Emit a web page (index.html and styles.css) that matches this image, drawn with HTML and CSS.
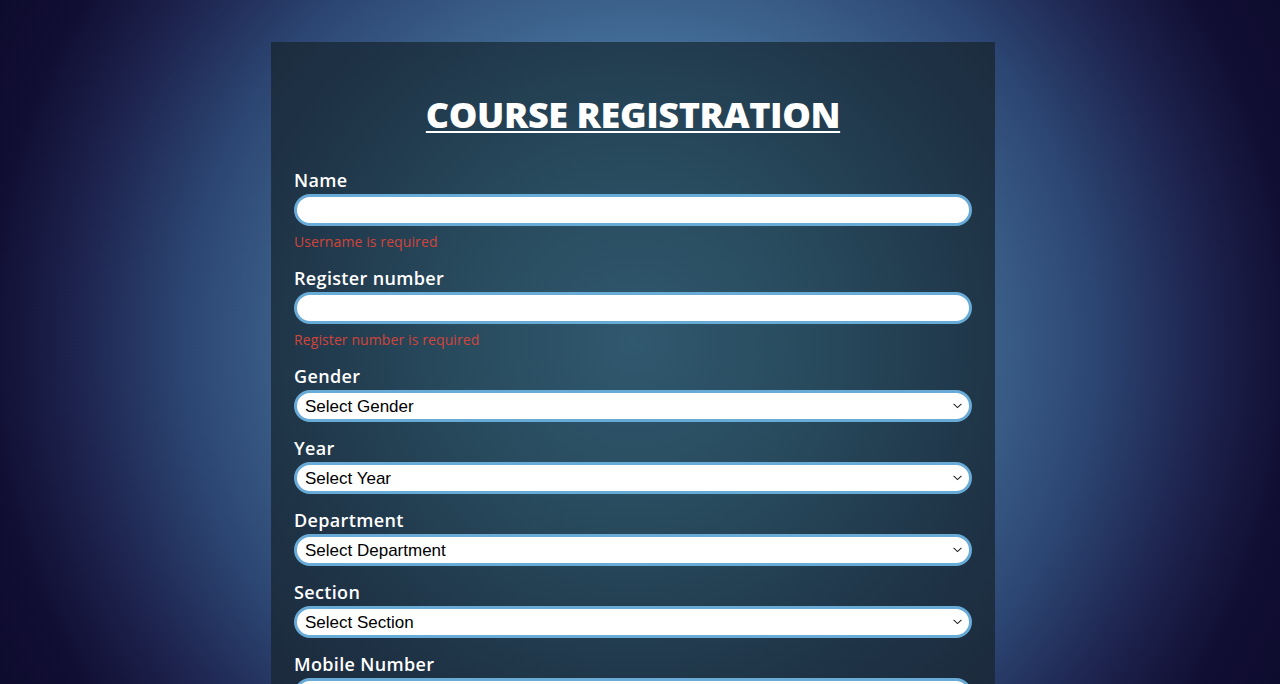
FILE: index.html
```html
<!DOCTYPE html>
<html lang="en">
<head>
<meta charset="utf-8">
<title>Course Registration</title>
<link rel="stylesheet" href="styles.css">
</head>
<body>
<main class="card">
  <h1 class="title">COURSE REGISTRATION</h1>
  <form class="form">
    <div class="field">
      <label class="label" for="name">Name</label>
      <input class="control" id="name" type="text">
      <div class="error">Username is required</div>
    </div>
    <div class="field">
      <label class="label" for="reg">Register number</label>
      <input class="control" id="reg" type="text">
      <div class="error">Register number is required</div>
    </div>
    <div class="field">
      <label class="label" for="gender">Gender</label>
      <select class="control select" id="gender"><option>Select Gender</option><option>Male</option><option>Female</option></select>
    </div>
    <div class="field">
      <label class="label" for="year">Year</label>
      <select class="control select" id="year"><option>Select Year</option><option>I</option><option>II</option><option>III</option><option>IV</option></select>
    </div>
    <div class="field">
      <label class="label" for="dept">Department</label>
      <select class="control select" id="dept"><option>Select Department</option></select>
    </div>
    <div class="field">
      <label class="label" for="section">Section</label>
      <select class="control select" id="section"><option>Select Section</option></select>
    </div>
    <div class="field">
      <label class="label" for="mobile">Mobile Number</label>
      <input class="control" id="mobile" type="text">
    </div>
    <div class="field">
      <label class="label" for="email">Email</label>
      <input class="control" id="email" type="text">
    </div>
  </form>
</main>
</body>
</html>
```
FILE: styles.css
```css
html {
  min-height: 100%;
  background: #0d0b2e radial-gradient(circle at 50% 50%, #5283ad 0%, #44709a 38%, #3a5e88 49%, #2c4572 63%, #1e2550 77%, #110e33 90%, #0d0b2e 100%) fixed;
}
body {
  margin: 0;
  padding: 42px 0 40px;
  font-family: "Open Sans", "Noto Sans", sans-serif;
  color: #ffffff;
}
.card {
  width: 724px;
  margin: 0 0 0 calc(50% - 369px);
  box-sizing: border-box;
  padding: 46px 23px 40px;
  background: radial-gradient(circle at 50% 300px, #30586e 0%, #284a5d 30%, #1f3447 60%, #1a2638 90%);
}
.title {
  margin: 0 0 24px;
  font-size: 36px;
  line-height: 54px;
  font-weight: 800;
  text-align: center;
  text-decoration: underline;
  text-decoration-thickness: 2px;
  text-underline-offset: 3px;
  letter-spacing: -0.4px;
}
.form {
  display: flex;
  flex-direction: column;
}
.field {
  display: flex;
  flex-direction: column;
  margin-bottom: 12px;
}
.label {
  font-size: 18px;
  line-height: 28px;
  font-weight: 600;
  letter-spacing: 0.35px;
  color: #ffffff;
}
.control {
  box-sizing: border-box;
  width: 100%;
  height: 32px;
  margin: 0;
  border: 3px solid #68abd6;
  border-radius: 16px;
  background-color: #ffffff;
  font-family: "Liberation Sans", Arial, sans-serif;
  font-size: 17px;
  color: #000000;
  padding: 0 8px;
  outline: none;
}
.select {
  appearance: none;
  -webkit-appearance: none;
  padding: 0 24px 0 8px;
  background-image: url("data:image/svg+xml,%3Csvg xmlns='http://www.w3.org/2000/svg' width='9' height='6' viewBox='0 0 9 6'%3E%3Cpath d='M0.6 0.8 L4.5 4.6 L8.4 0.8' fill='none' stroke='%23222' stroke-width='1.1'/%3E%3C/svg%3E");
  background-repeat: no-repeat;
  background-position: right 7px center;
  background-size: 9px 6px;
}
.error {
  margin-top: 5px;
  font-size: 14px;
  line-height: 21px;
  letter-spacing: 0.1px;
  color: #d2443a;
}
```
